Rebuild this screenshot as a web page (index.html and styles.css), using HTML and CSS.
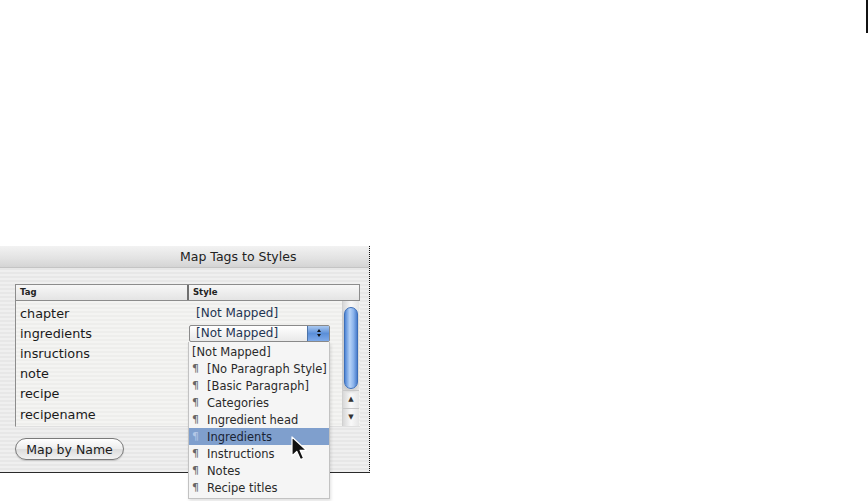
FILE: index.html
```html
<!DOCTYPE html>
<html lang="en">
<head>
  <meta charset="UTF-8" />
  <title>Map Tags to Styles</title>
  <link rel="stylesheet" href="styles.css">
</head>
<body>
  <div class="corner"><span class="edge"></span></div>

  <div class="dialog">
    <div class="titlebar">Map Tags to Styles</div>
    <div class="content">
      <div class="table">
        <div class="thead">
          <div class="th tag-col">Tag</div>
          <div class="th">Style</div>
        </div>
        <div class="tbody">
          <div class="rows">
            <div class="row"><span class="tag">chapter</span><span class="style">[Not Mapped]</span></div>
            <div class="row">
              <span class="tag">ingredients</span>
              <span class="popup">
                <span class="popup-label">[Not Mapped]</span>
                <span class="stepper"><i class="up"></i><i class="down"></i></span>
              </span>
            </div>
            <div class="row"><span class="tag">insructions</span></div>
            <div class="row"><span class="tag">note</span></div>
            <div class="row"><span class="tag">recipe</span></div>
            <div class="row"><span class="tag">recipename</span></div>
          </div>
          <div class="scrollbar">
            <div class="track"><div class="thumb"></div></div>
            <div class="arrow">&#9650;</div>
            <div class="arrow">&#9660;</div>
          </div>
        </div>
      </div>
      <button class="map-btn">Map by Name</button>
    </div>

    <ul class="menu">
      <li>[Not Mapped]</li>
      <li><span class="pil">&para;</span>[No Paragraph Style]</li>
      <li><span class="pil">&para;</span>[Basic Paragraph]</li>
      <li><span class="pil">&para;</span>Categories</li>
      <li><span class="pil">&para;</span>Ingredient head</li>
      <li class="selected"><span class="pil">&para;</span>Ingredients</li>
      <li><span class="pil">&para;</span>Instructions</li>
      <li><span class="pil">&para;</span>Notes</li>
      <li><span class="pil">&para;</span>Recipe titles</li>
    </ul>

    <svg class="cursor" width="17" height="27" viewBox="0 0 17 27">
      <path d="M1 1 L1 20 L5.8 15.4 L9.4 23.6 L12.6 22.2 L9.1 14.3 L15.4 14.3 Z" fill="#111" stroke="#fff" stroke-width="1.2" stroke-linejoin="round"/>
    </svg>
  </div>
</body>
</html>
```

FILE: styles.css
```css
html, body {
  min-height: 501px;
}
body {
  margin: 0;
  background: #fff;
  font-family: 'DejaVu Sans', Verdana, sans-serif;
  color: #222;
}
.corner {
  display: flex;
  justify-content: flex-end;
  height: 33px;
}
.edge {
  width: 2px;
  background: #111;
}
.dialog {
  position: relative;
  margin-top: 213px;
  width: 369px;
  height: 226px;
  border-right: 1px dotted #111;
  border-bottom: 1px solid #2a2a2a;
  background: repeating-linear-gradient(to bottom, #efefef 0, #efefef 2px, #e7e7e7 2px, #e7e7e7 4px);
}
.titlebar {
  height: 22px;
  line-height: 22px;
  padding-left: 180px;
  font-size: 12.5px;
  color: #222;
  background: linear-gradient(to bottom, #f2f2f2, #e2e2e2 60%, #d4d4d4);
  border-bottom: 1px solid #c4c4c4;
  box-sizing: border-box;
}
.content {
  padding: 16px 9px 0 15px;
}
.table {
  width: 345px;
}
.thead {
  display: flex;
  height: 17px;
  border: 1px solid #8c8c8c;
  box-sizing: border-box;
  background: linear-gradient(to bottom, #f7f7f7, #e4e4e4);
}
.th {
  font-size: 8.5px;
  font-weight: bold;
  line-height: 15px;
  padding-left: 4px;
  color: #222;
}
.tag-col {
  width: 167px;
  border-right: 2px solid #6f6f6f;
}
.tbody {
  display: flex;
  height: 125px;
  border-left: 1px solid #8c8c8c;
  border-bottom: 1px solid #e0e0e0;
  background: repeating-linear-gradient(to bottom, #f4f4f2 0, #f4f4f2 2px, #eeeeec 2px, #eeeeec 4px);
}
.rows {
  flex: 1;
  padding-top: 2px;
}
.row {
  display: flex;
  align-items: center;
  height: 20.2px;
}
.tag {
  width: 167px;
  padding-left: 4px;
  font-size: 12.8px;
  color: #1a1a1a;
}
.style {
  padding-left: 9px;
  font-size: 12px;
  color: #1f3553;
}
.popup {
  display: flex;
  align-items: center;
  width: 141px;
  height: 17px;
  margin-left: 2px;
  border: 1px solid #8a8a8a;
  border-radius: 2px;
  box-sizing: border-box;
  background: linear-gradient(to bottom, #ffffff, #e9e9e9);
}
.popup-label {
  flex: 1;
  padding-left: 6px;
  font-size: 12px;
  color: #1f3553;
}
.stepper {
  display: flex;
  flex-direction: column;
  align-items: center;
  justify-content: center;
  gap: 2px;
  width: 21px;
  height: 15px;
  background: linear-gradient(to bottom, #a9c8f0, #5b8fd8 50%, #7eaaea);
  border-left: 1px solid #4c73a8;
}
.stepper i {
  width: 0;
  height: 0;
  border-left: 2.5px solid transparent;
  border-right: 2.5px solid transparent;
}
.stepper .up {
  border-bottom: 3px solid #111;
}
.stepper .down {
  border-top: 3px solid #111;
}
.scrollbar {
  display: flex;
  flex-direction: column;
  width: 16px;
  margin-right: 1px;
  padding-top: 3px;
  border-left: 1px solid #d0d0d0;
  background: linear-gradient(to right, #d8d8d8, #f9f9f9 50%, #e6e6e6);
}
.track {
  flex: 1;
  padding: 3px 1px 0;
}
.thumb {
  height: 82px;
  border-radius: 7px;
  border: 1px solid #3d6fb8;
  box-sizing: border-box;
  background: linear-gradient(to right, #4f86d6, #b7d3f7 40%, #8bb4ec 70%, #4c7fcd);
  box-shadow: 0 3px 3px rgba(0, 0, 0, 0.15);
}
.arrow {
  height: 17px;
  font-size: 7px;
  line-height: 17px;
  text-align: center;
  color: #333;
  border-top: 1px solid #c8c8c8;
}
.map-btn {
  display: block;
  margin-top: 11px;
  width: 109px;
  height: 22px;
  padding: 0;
  border: 1px solid #7a7a7a;
  border-radius: 11px;
  background: linear-gradient(to bottom, #ffffff, #ececec 50%, #dcdcdc 51%, #f2f2f2);
  font-family: 'DejaVu Sans', Verdana, sans-serif;
  font-size: 12.5px;
  color: #1a1a1a;
  box-shadow: 0 1px 1px rgba(0, 0, 0, 0.15);
}
.menu {
  position: absolute;
  left: 188px;
  top: 96px;
  width: 142px;
  margin: 0;
  padding: 1px 0 2px;
  list-style: none;
  background: #f5f5f5;
  border: 1px solid #c2c2c2;
  border-top: none;
  box-sizing: border-box;
  box-shadow: 1px 2px 3px rgba(0, 0, 0, 0.12);
}
.menu li {
  display: flex;
  align-items: center;
  height: 17px;
  padding-left: 3px;
  font-size: 11.5px;
  color: #2a2a2a;
}
.menu li.selected {
  background: #7f9fcd;
  color: #1a2436;
}
.pil {
  width: 15px;
  font-size: 11px;
  color: #666;
}
.selected .pil {
  color: #b3c7e6;
}
.cursor {
  position: absolute;
  left: 291px;
  top: 190px;
}
```
